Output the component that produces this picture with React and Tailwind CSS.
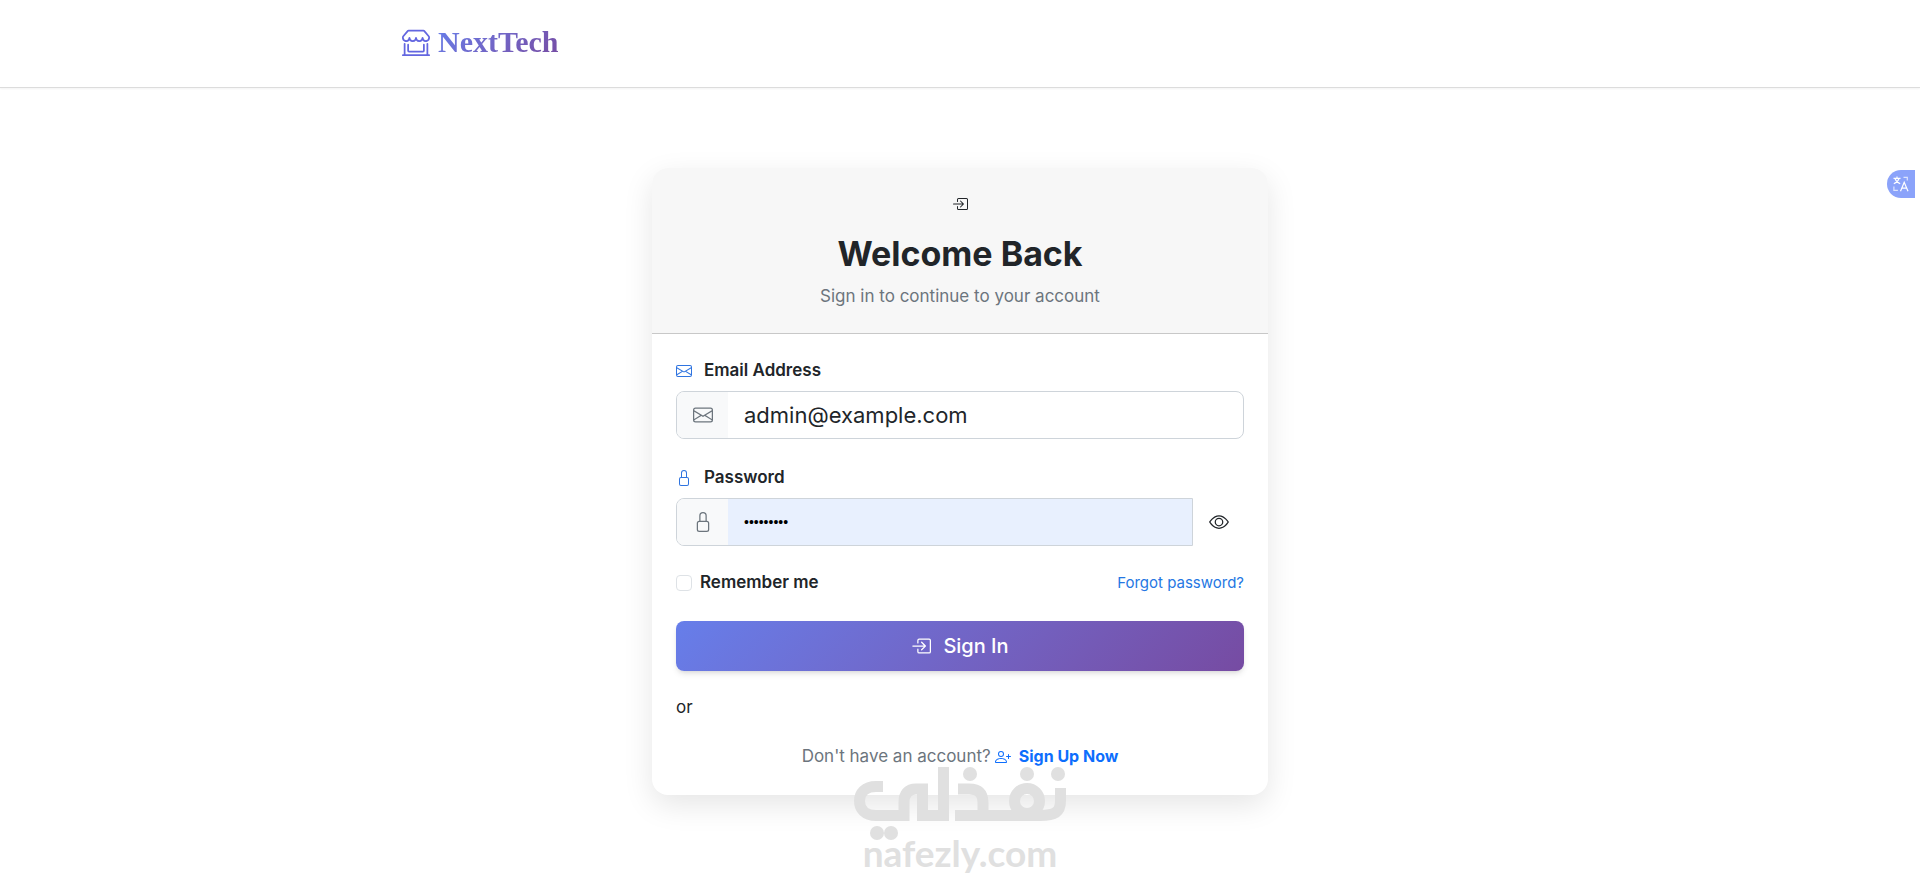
import { useState } from "react";
import {
  BsShopWindow,
  BsBoxArrowInRight,
  BsEnvelope,
  BsLock,
  BsEye,
  BsPersonPlus,
} from "react-icons/bs";

function Header() {
  return (
    <header className="border-b border-[#dcdcdc] bg-white shadow-xs">
      <div className="mx-auto flex h-[87px] max-w-[1140px] items-center px-3 pb-1">
        <a href="#home" className="flex items-center gap-2">
          <BsShopWindow className="size-7 text-[#6366e0]" aria-hidden="true" />
          <span className="bg-linear-135 from-[#667eea] to-[#764ba2] bg-clip-text font-['Liberation_Serif',serif] text-[30px] leading-9 font-bold text-transparent">
            NextTech
          </span>
        </a>
      </div>
    </header>
  );
}

function FieldLabel({ htmlFor, icon: Icon, children }) {
  return (
    <label htmlFor={htmlFor} className="mb-2 flex items-center gap-3 font-semibold">
      <Icon className="size-4 text-[#2f74e0]" aria-hidden="true" />
      {children}
    </label>
  );
}

function FieldIcon({ icon: Icon }) {
  return (
    <span className="flex w-[51px] shrink-0 items-center justify-center bg-[#f8f9fa]">
      <Icon className="size-5 text-[#6c757d]" aria-hidden="true" />
    </span>
  );
}

function LoginCard() {
  const [shown, setShown] = useState(false);
  return (
    <main className="mx-auto w-full max-w-[616px] overflow-hidden rounded-2xl bg-white shadow-[0_10px_30px_rgba(0,0,0,0.1)]">
      <div className="flex flex-col items-center border-b border-[#c8c8c8] bg-[#f7f7f7] px-6 pt-7 pb-6 text-center">
        <BsBoxArrowInRight className="size-4" aria-hidden="true" />
        <h1 className="mt-6 text-[34px] leading-9 font-bold">Welcome Back</h1>
        <p className="mt-3 text-[#6c757d]">Sign in to continue to your account</p>
      </div>

      <form className="px-6 pt-6 pb-[26px]" onSubmit={(e) => e.preventDefault()}>
        <FieldLabel htmlFor="email" icon={BsEnvelope}>Email Address</FieldLabel>
        <div className="flex h-12 overflow-hidden rounded-lg border border-[#ced4da]">
          <FieldIcon icon={BsEnvelope} />
          <input
            id="email"
            type="email"
            defaultValue="admin@example.com"
            className="min-w-0 flex-1 px-4 text-[22px] outline-none"
          />
        </div>

        <div className="mt-[26px]">
          <FieldLabel htmlFor="password" icon={BsLock}>Password</FieldLabel>
          <div className="flex h-12">
            <div className="flex flex-1 overflow-hidden rounded-l-lg border border-[#ced4da]">
              <FieldIcon icon={BsLock} />
              <input
                id="password"
                type={shown ? "text" : "password"}
                defaultValue="admin1234"
                className="min-w-0 flex-1 bg-[#e8f0fe] px-4 font-['Liberation_Sans',sans-serif] text-sm text-black outline-none"
              />
            </div>
            <button
              type="button"
              aria-label="Show password"
              onClick={() => setShown(!shown)}
              className="flex w-[51px] items-center justify-center"
            >
              <BsEye className="size-5" aria-hidden="true" />
            </button>
          </div>
        </div>

        <div className="mt-6 flex items-center justify-between">
          <label className="flex items-center gap-2 font-semibold">
            <input
              type="checkbox"
              className="size-4 appearance-none rounded border border-[#dee2e6] bg-white checked:bg-[#0d6efd]"
            />
            Remember me
          </label>
          <a href="#forgot" className="text-[15px] text-[#2577e3]">Forgot password?</a>
        </div>

        <button
          type="submit"
          className="mt-[26px] flex h-[50px] w-full items-center justify-center gap-3 rounded-lg bg-linear-135 from-[#667eea] to-[#764ba2] text-xl font-medium text-white shadow-md"
        >
          <BsBoxArrowInRight className="size-5" aria-hidden="true" />
          Sign In
        </button>

        <p className="mt-6">or</p>

        <p className="mt-6 flex items-center justify-center gap-1 text-[#6c757d]">
          Don't have an account?
          <a href="#signup" className="flex items-center gap-2 text-base leading-[25px] font-bold text-[#0d6efd]">
            <BsPersonPlus className="size-4" aria-hidden="true" />
            Sign Up Now
          </a>
        </p>
      </form>
    </main>
  );
}

function TranslateTab() {
  return (
    <button
      type="button"
      aria-label="Translate"
      className="fixed top-[170px] right-[5px] flex h-7 w-7 items-center justify-center rounded-l-full rounded-r-sm bg-[#8ba3fa] text-white"
    >
      <svg viewBox="0 0 16 16" className="size-4" fill="none" stroke="currentColor" strokeWidth="1.2" aria-hidden="true">
        <path d="M4 0.5v1.6M0.5 2.4h7M6 2.6C5.2 5 3.5 6.7 0.8 7.8M2 2.6C2.8 5 4.5 6.7 7.2 7.8" />
        <path d="M7.5 15.2 11.2 6.2 15 15.2M8.8 12.2h4.8" />
        <path d="M10.5 1.4h3.8v3M0.9 10.5v3.8h4" opacity="0.7" />
      </svg>
    </button>
  );
}

function Watermark() {
  return (
    <svg
      viewBox="0 0 216 108"
      className="pointer-events-none absolute bottom-0 left-1/2 h-[108px] w-[216px] -translate-x-1/2"
      role="img"
      aria-label="Nafezly"
    >
      <g fill="none" stroke="#e0e0e0" strokeWidth="11">
        <path d="M31 19.500H24C13 19.500 7.500 26 7.500 34S13 48.500 24 48.500H52V35C52 27 56 22 64 22H70.500V48.500H91.500V0" />
        <path d="M106 22H117C127 22 131 27 131 36V48.500H103M129 48.500H188C203 48.500 208.500 45 208.500 34V21" />
        <circle cx="175" cy="34" r="12.500" />
      </g>
      <g fill="#e0e0e0">
        <circle cx="118" cy="7" r="7" />
        <circle cx="175" cy="7" r="7" />
        <circle cx="206" cy="7" r="7" />
        <circle cx="25" cy="66" r="7" />
        <circle cx="39" cy="66" r="7" />
      </g>
      <text x="108" y="100" textAnchor="middle" fill="#e0e0e0" fontSize="37" fontWeight="700" fontFamily="Lato, sans-serif">
        nafezly.com
      </text>
    </svg>
  );
}

export default function App() {
  return (
    <div className="relative min-h-screen bg-white font-['Inter',sans-serif] text-[17px] leading-[25px] text-[#212529]">
      <Header />
      <div className="px-4 py-20">
        <LoginCard />
      </div>
      <TranslateTab />
      <Watermark />
    </div>
  );
}
